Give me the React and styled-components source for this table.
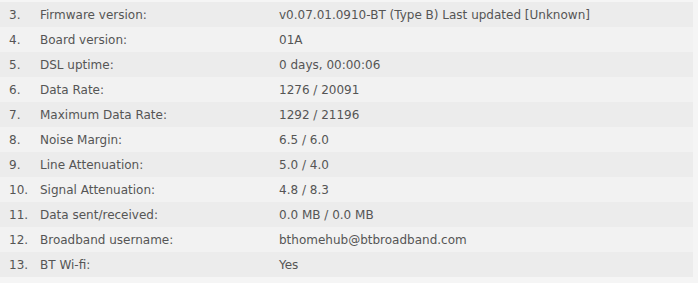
import React from 'react';
import styled, { createGlobalStyle } from 'styled-components';

const GlobalStyle = createGlobalStyle`
  html, body {
    margin: 0;
    padding: 0;
    background: #f5f5f5;
  }
`;

const rows = [
  ['3.', 'Firmware version:', 'v0.07.01.0910-BT (Type B) Last updated [Unknown]'],
  ['4.', 'Board version:', '01A'],
  ['5.', 'DSL uptime:', '0 days, 00:00:06'],
  ['6.', 'Data Rate:', '1276 / 20091'],
  ['7.', 'Maximum Data Rate:', '1292 / 21196'],
  ['8.', 'Noise Margin:', '6.5 / 6.0'],
  ['9.', 'Line Attenuation:', '5.0 / 4.0'],
  ['10.', 'Signal Attenuation:', '4.8 / 8.3'],
  ['11.', 'Data sent/received:', '0.0 MB / 0.0 MB'],
  ['12.', 'Broadband username:', 'bthomehub@btbroadband.com'],
  ['13.', 'BT Wi-fi:', 'Yes'],
];

const Table = styled.div`
  width: 693px;
  margin-top: 2px;
  font-family: 'DejaVu Sans', Verdana, sans-serif;
  font-size: 12px;
  color: #555;
`;

const Row = styled.div`
  display: grid;
  grid-template-columns: 40px 239px 1fr;
  height: 25px;
  align-items: center;
  background: ${({ odd }) => (odd ? '#ececec' : '#f2f2f2')};
`;

const Num = styled.span`
  padding-left: 9px;
`;

const Cell = styled.span`
  white-space: nowrap;
`;

export default function App() {
  return (
    <>
      <GlobalStyle />
      <Table>
        {rows.map(([n, label, value], i) => (
          <Row key={n} odd={i % 2 === 0}>
            <Num>{n}</Num>
            <Cell>{label}</Cell>
            <Cell>{value}</Cell>
          </Row>
        ))}
      </Table>
    </>
  );
}
